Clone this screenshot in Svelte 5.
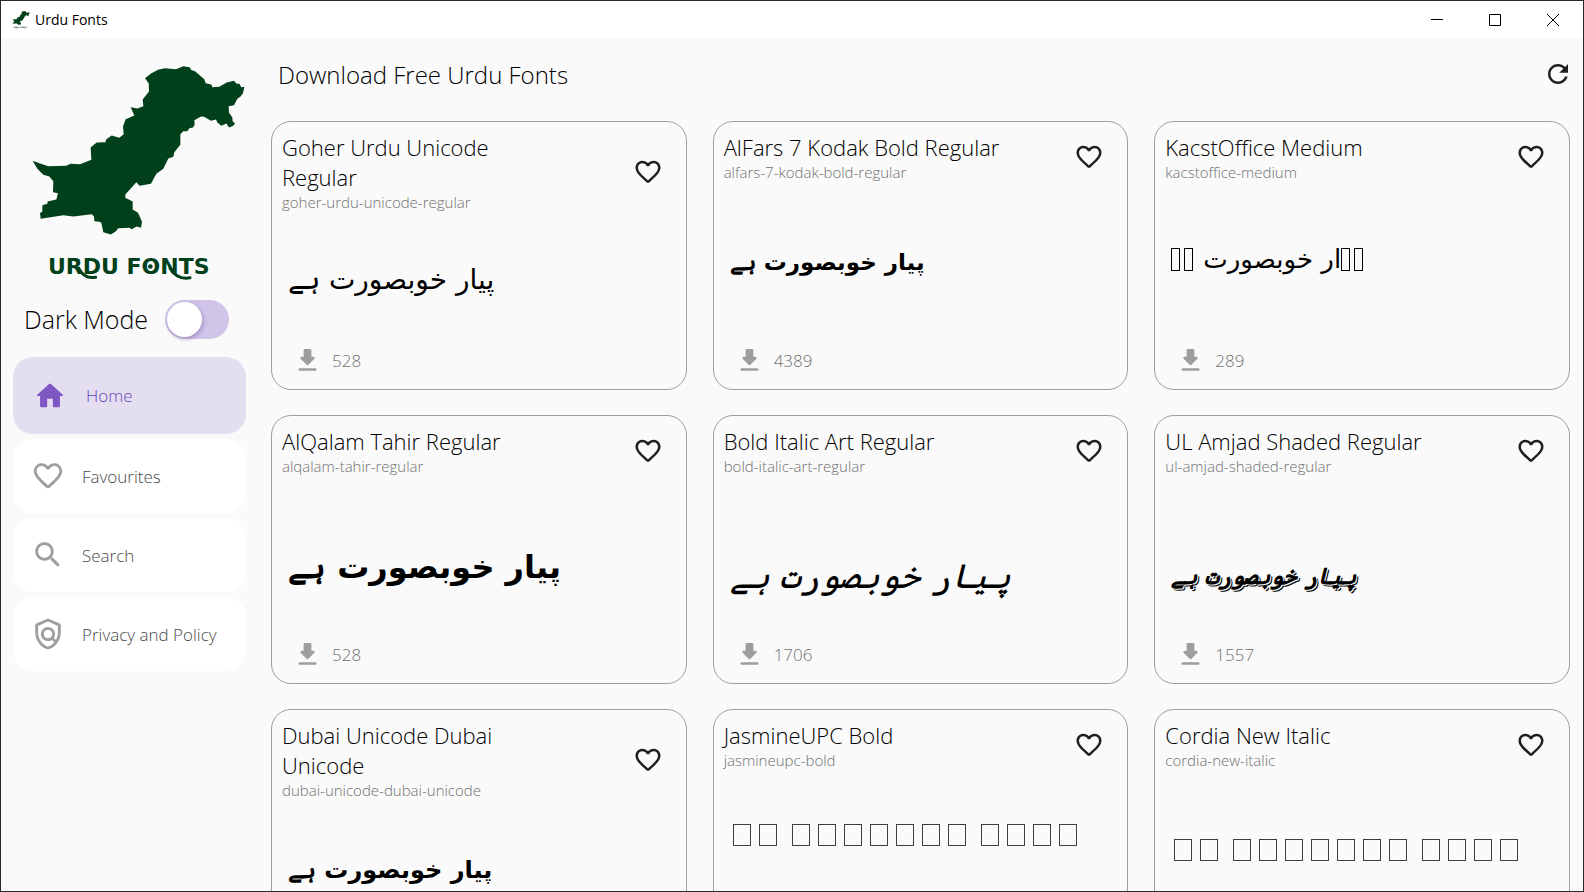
<script lang="ts">
	type Font = {
		title: string;
		slug: string;
		downloads?: number;
		size: number;
		top: number;
		style?: string;
		kind?: 'full' | 'partial' | 'missing';
	};

	const sample = 'پیار خوبصورت ہے';

	const icons = {
		home: 'M10 19v-5h4v5c0 .55.45 1 1 1h3c.55 0 1-.45 1-1v-7h1.7c.46 0 .68-.57.33-.87L12.67 3.6c-.38-.34-.96-.34-1.34 0l-8.36 7.53c-.34.3-.13.87.33.87H5v7c0 .55.45 1 1 1h3c.55 0 1-.45 1-1z',
		heart: 'M19.66 3.99c-2.64-1.8-5.9-.96-7.66 1.1-1.76-2.06-5.02-2.91-7.66-1.1-1.4.96-2.28 2.58-2.34 4.29-.14 3.88 3.3 6.99 8.55 11.76l.1.09c.76.69 1.93.69 2.69-.01l.11-.1c5.25-4.76 8.68-7.87 8.55-11.75-.06-1.7-.94-3.32-2.34-4.28zM12.1 18.55l-.1.1-.1-.1C7.14 14.24 4 11.39 4 8.5 4 6.5 5.5 5 7.5 5c1.54 0 3.04.99 3.57 2.36h1.87C13.46 5.99 14.96 5 16.5 5c2 0 3.5 1.5 3.5 3.5 0 2.89-3.14 5.74-7.9 10.05z',
		search: 'M15.5 14h-.79l-.28-.27c1.2-1.4 1.82-3.31 1.48-5.34-.47-2.78-2.79-5-5.59-5.34-4.23-.52-7.79 3.04-7.27 7.27.34 2.8 2.56 5.12 5.34 5.59 2.03.34 3.94-.28 5.34-1.48l.27.28v.79l4.25 4.25c.41.41 1.08.41 1.49 0 .41-.41.41-1.08 0-1.49L15.5 14zm-6 0C7.01 14 5 11.99 5 9.5S7.01 5 9.5 5 14 7.01 14 9.5 11.99 14 9.5 14z',
		policy: 'M12 1L3 5v6c0 5.55 3.84 10.74 9 12 5.16-1.26 9-6.45 9-12V5l-9-4zm7 10c0 1.85-.51 3.65-1.38 5.21l-1.45-1.45c1.29-1.94 1.07-4.58-.64-6.29-1.95-1.95-5.12-1.95-7.07 0-1.95 1.95-1.95 5.12 0 7.07 1.71 1.71 4.35 1.92 6.29.64l1.72 1.72c-1.19 1.42-2.73 2.51-4.47 3.04-4.02-1.25-7-5.42-7-9.94V6.3l7-3.11 7 3.11V11zm-7 4c-1.66 0-3-1.34-3-3s1.34-3 3-3 3 1.34 3 3-1.34 3-3 3z',
		refresh: 'M17.65 6.35C16.2 4.9 14.21 4 12 4c-4.42 0-7.99 3.58-7.99 8s3.57 8 7.99 8c3.73 0 6.84-2.55 7.73-6h-2.08c-.82 2.33-3.04 4-5.65 4-3.31 0-6-2.69-6-6s2.69-6 6-6c1.66 0 3.14.69 4.22 1.78L13 11h7V4l-2.35 2.35z',
		download: 'M16.59 9H15V4c0-.55-.45-1-1-1h-4c-.55 0-1 .45-1 1v5H7.41c-.89 0-1.34 1.08-.71 1.71l4.59 4.59c.39.39 1.02.39 1.41 0l4.59-4.59c.63-.63.19-1.71-.7-1.71zM5 19c0 .55.45 1 1 1h12c.55 0 1-.45 1-1s-.45-1-1-1H6c-.55 0-1 .45-1 1z'
	};

	const nav = [
		{ id: 'home', label: 'Home', icon: icons.home },
		{ id: 'favourites', label: 'Favourites', icon: icons.heart },
		{ id: 'search', label: 'Search', icon: icons.search },
		{ id: 'privacy', label: 'Privacy and Policy', icon: icons.policy }
	];

	const fonts: Font[] = [
		{ title: 'Goher Urdu Unicode Regular', slug: 'goher-urdu-unicode-regular', downloads: 528, size: 28, top: 48 },
		{ title: 'AlFars 7 Kodak Bold Regular', slug: 'alfars-7-kodak-bold-regular', downloads: 4389, size: 23, top: 60, style: 'bold' },
		{ title: 'KacstOffice Medium', slug: 'kacstoffice-medium', downloads: 289, size: 26, top: 57, kind: 'partial' },
		{ title: 'AlQalam Tahir Regular', slug: 'alqalam-tahir-regular', downloads: 528, size: 32, top: 71, style: 'bold' },
		{ title: 'Bold Italic Art Regular', slug: 'bold-italic-art-regular', downloads: 1706, size: 34, top: 80, style: 'italic' },
		{ title: 'UL Amjad Shaded Regular', slug: 'ul-amjad-shaded-regular', downloads: 1557, size: 23, top: 80, style: 'shaded' },
		{ title: 'Dubai Unicode Dubai Unicode', slug: 'dubai-unicode-dubai-unicode', size: 24, top: 50, style: 'bold' },
		{ title: 'JasmineUPC Bold', slug: 'jasmineupc-bold', size: 30, top: 45, kind: 'missing' },
		{ title: 'Cordia New Italic', slug: 'cordia-new-italic', size: 30, top: 60, kind: 'missing' }
	];

	// glyph counts per word, left to right
	const words = [2, 7, 4];

	let dark = $state(false);
	let active = $state('home');
	let liked = $state<string[]>([]);

	function toggleLike(slug: string) {
		liked = liked.includes(slug) ? liked.filter((s) => s !== slug) : [...liked, slug];
	}
</script>

{#snippet icon(d: string, size: number)}
	<svg width={size} height={size} viewBox="0 0 24 24" fill="currentColor" aria-hidden="true">
		<path {d} />
	</svg>
{/snippet}

{#snippet logo(cls: string)}
	<svg class={cls} viewBox="36 45 642 650" role="img" aria-label="Urdu Fonts logo">
		<path
			d="M38 332 60 340 85 348 139 347 152 341 180 342 214 329 212 292 230 277 256 276 259 267 275 256 298 263 311 252 309 229 317 207 343 196 332 171 352 175 370 168 368 148 387 124 386 99 375 84 392 71 414 59 435 54 468 57 490 48 509 51 513 59 526 64 553 87 557 99 574 103 577 111 598 110 620 97 642 92 650 101 658 101 664 111 673 110 669 129 661 140 652 146 642 165 626 168 627 188 637 202 638 213 645 220 640 227 627 232 619 220 604 227 592 217 588 208 573 212 552 200 543 199 523 210 524 224 519 232 508 234 502 243 490 243 481 252 481 284 463 306 460 320 445 325 430 356 409 371 393 401 359 407 349 396 316 433 316 443 338 454 338 478 354 488 366 515 363 533 350 529 335 537 328 533 295 534 287 544 272 553 250 546 244 518 238 515 223 513 222 499 215 492 160 499 130 495 62 506 60 489 67 484 67 465 82 461 83 454 109 448 114 429 99 426 100 393 88 379 70 374 52 356z"
			fill="#00401a"
		/>
		<text x="84" y="672" font-size="66">URDU FONTS</text>
		<path class="swash" d="M176 654Q192 688 227 681M450 654Q472 690 510 683" />
		<circle cx="391" cy="649" r="7" fill="#00401a" />
	</svg>
{/snippet}

{#snippet tofu(count: number, narrow: boolean)}
	<span class="tofu" class:narrow>
		{#each { length: count } as _}<i></i>{/each}
	</span>
{/snippet}

<div class="window" class:dark>
	<header class="titlebar">
		{@render logo('app-icon')}
		<span class="app-name">Urdu Fonts</span>
		<div class="controls">
			<button aria-label="Minimize">
				<svg width="12" height="12" viewBox="0 0 12 12"><path d="M0 5.5h12" /></svg>
			</button>
			<button aria-label="Maximize">
				<svg width="12" height="12" viewBox="0 0 12 12"><path d="M.5.5h11v11H.5z" /></svg>
			</button>
			<button aria-label="Close">
				<svg width="12" height="12" viewBox="0 0 12 12"><path d="M0 0l12 12M12 0L0 12" /></svg>
			</button>
		</div>
	</header>

	<div class="body">
		<aside>
			{@render logo('brand')}
			<label class="mode">
				Dark Mode
				<input type="checkbox" role="switch" bind:checked={dark} />
			</label>
			<nav>
				{#each nav as item (item.id)}
					<button class="item" class:active={active === item.id} onclick={() => (active = item.id)}>
						{@render icon(item.icon, 34)}
						<span>{item.label}</span>
					</button>
				{/each}
			</nav>
		</aside>

		<main>
			<div class="head">
				<h1>Download Free Urdu Fonts</h1>
				<button class="plain" aria-label="Refresh">{@render icon(icons.refresh, 30)}</button>
			</div>
			<div class="grid">
				{#each fonts as f (f.slug)}
					<article class="card">
						<div class="top">
							<div class="names">
								<h2>{f.title}</h2>
								<p class="slug">{f.slug}</p>
							</div>
							<button
								class="plain"
								class:liked={liked.includes(f.slug)}
								aria-label="Add {f.title} to favourites"
								onclick={() => toggleLike(f.slug)}
							>
								{@render icon(icons.heart, 30)}
							</button>
						</div>
						<div class="preview {f.style ?? ''}" style="font-size: {f.size}px; padding-top: {f.top}px">
							{#if f.kind === 'missing'}
								{#each words as count}{@render tofu(count, false)}{/each}
							{:else if f.kind === 'partial'}
								{@render tofu(2, true)}
								<span class="rest" lang="ur" dir="rtl">ار خوبصورت</span>
								{@render tofu(2, true)}
							{:else}
								<span lang="ur" dir="rtl">{sample}</span>
							{/if}
						</div>
						{#if f.downloads !== undefined}
							<div class="stats">
								{@render icon(icons.download, 31)}
								<span>{f.downloads}</span>
							</div>
						{/if}
					</article>
				{/each}
			</div>
		</main>
	</div>
</div>

<style>
	:global(body) {
		margin: 0;
	}
	.window {
		--bg: #fafafa;
		--surface: #ffffff;
		--fg: #000000;
		--icon: #1f1f1f;
		--dim: #9e9e9e;
		box-sizing: border-box;
		height: 100vh;
		display: flex;
		flex-direction: column;
		overflow: hidden;
		border: 1px solid #2b282c;
		background: var(--bg);
		color: var(--fg);
		font-family: 'Open Sans', 'Noto Sans', sans-serif;
		font-weight: 300;
	}
	.window.dark {
		--bg: #303030;
		--surface: #424242;
		--fg: #ffffff;
		--icon: #f5f5f5;
	}
	button {
		border: 0;
		padding: 0;
		background: none;
		color: inherit;
		font: inherit;
		cursor: pointer;
	}
	svg {
		display: block;
		flex: none;
	}

	.titlebar {
		display: flex;
		align-items: center;
		height: 37px;
		flex: none;
		padding: 0 1px 0 11px;
		background: #fff;
		color: #000;
	}
	.app-icon {
		width: 18px;
		height: 18px;
	}
	.app-name {
		margin-left: 5px;
		font-size: 14px;
		font-weight: 400;
	}
	.controls {
		display: flex;
		height: 100%;
		margin-left: auto;
	}
	.controls button {
		width: 58px;
		display: grid;
		place-items: center;
	}
	.controls path {
		fill: none;
		stroke: currentColor;
	}

	.body {
		display: flex;
		flex: 1;
		min-height: 0;
	}
	aside {
		width: 233px;
		flex: none;
		padding: 27px 25px 0 12px;
	}
	.brand {
		width: 214px;
		height: 217px;
		margin-left: 19px;
	}
	svg text {
		font-family: 'DejaVu Sans', sans-serif;
		font-weight: 700;
		fill: #00401a;
	}
	.swash {
		fill: none;
		stroke: #00401a;
		stroke-width: 9;
		stroke-linecap: round;
	}
	.mode {
		display: flex;
		align-items: center;
		justify-content: space-between;
		height: 40px;
		margin: 17px 17px 18px 11px;
		font-size: 25px;
	}
	.mode input {
		appearance: none;
		box-sizing: border-box;
		width: 64px;
		height: 39px;
		margin: 0;
		padding: 2px;
		border-radius: 20px;
		background: #d1c4e9;
		cursor: pointer;
	}
	.mode input::before {
		content: '';
		display: block;
		width: 35px;
		height: 35px;
		border-radius: 50%;
		background: #fff;
		box-shadow: 1px 2px 4px rgba(60, 40, 100, 0.35);
	}
	.mode input:checked::before {
		margin-left: auto;
	}
	nav {
		display: flex;
		flex-direction: column;
		gap: 5px;
	}
	.item {
		display: flex;
		align-items: center;
		gap: 17px;
		height: 74px;
		padding: 0 18px;
		border-radius: 20px;
		background: var(--surface);
		color: var(--dim);
		font-size: 17px;
	}
	.item span {
		color: #4a4a4a;
	}
	.item.active {
		height: 77px;
		gap: 19px;
		padding: 0 20px;
		background: #e4dff0;
		color: #7e57c2;
	}
	.item.active span {
		color: #6a3fb8;
	}

	main {
		flex: 1;
		min-width: 0;
		padding: 0 13px 26px 0;
		overflow-y: auto;
		scrollbar-width: none;
	}
	.head {
		display: flex;
		align-items: center;
		justify-content: space-between;
		height: 72px;
		margin-bottom: 11px;
		padding-left: 7px;
	}
	h1 {
		margin: 0;
		font-size: 24px;
		font-weight: 300;
	}
	.plain {
		display: block;
		color: var(--icon);
	}
	.head .plain {
		margin-right: -3px;
	}
	.grid {
		display: grid;
		grid-template-columns: repeat(3, 1fr);
		gap: 25px 26px;
	}
	.card {
		box-sizing: border-box;
		display: flex;
		flex-direction: column;
		height: 269px;
		padding: 10px 23px 13px 10px;
		border: 1px solid var(--dim);
		border-radius: 20px;
	}
	.top {
		display: flex;
		align-items: center;
		justify-content: space-between;
	}
	.names {
		width: 282px;
	}
	h2 {
		margin: 0;
		font-size: 22px;
		line-height: 30px;
		font-weight: 300;
	}
	.slug {
		margin: 0;
		font-size: 15px;
		line-height: 20px;
		color: #707070;
	}
	.liked {
		color: #7e57c2;
	}
	.preview {
		display: flex;
		align-items: center;
		padding-left: 6px;
		white-space: nowrap;
		line-height: 40px;
		color: #000;
		font-family: 'DejaVu Sans', sans-serif;
		font-weight: 400;
	}
	.dark .preview {
		color: #fff;
	}
	.preview > * {
		min-height: 40px;
	}
	.bold {
		font-weight: 700;
	}
	.italic {
		font-style: italic;
	}
	.shaded {
		font-weight: 700;
		font-style: italic;
		text-shadow:
			1px 1px 0 var(--bg),
			2px 2px 0 currentColor;
	}
	.tofu {
		display: flex;
		align-items: center;
		gap: 8px;
		margin: 0 12px 0 3px;
	}
	.tofu i {
		box-sizing: border-box;
		width: 18px;
		height: 22px;
		border: 1px solid currentColor;
		opacity: 0.75;
	}
	.tofu.narrow {
		gap: 4px;
		margin: 0;
	}
	.narrow i {
		width: 9px;
		height: 23px;
		opacity: 1;
	}
	.rest {
		margin-left: 10px;
	}
	.stats {
		display: flex;
		align-items: center;
		gap: 9px;
		margin-top: auto;
		padding-left: 10px;
		font-size: 17px;
		color: #707070;
	}
	.stats svg {
		color: var(--dim);
	}
</style>
